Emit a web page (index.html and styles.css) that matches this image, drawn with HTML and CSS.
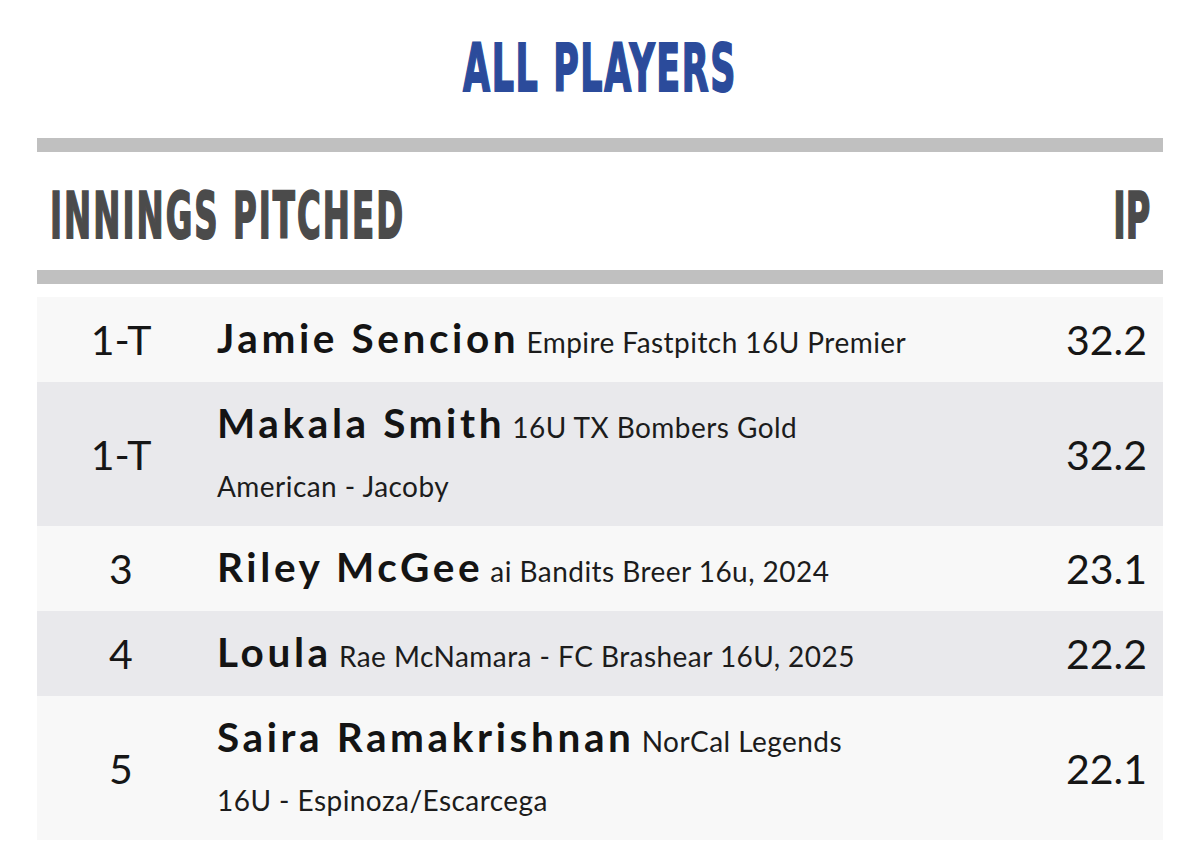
FILE: index.html
```html
<!DOCTYPE html>
<html lang="en">
<head>
<meta charset="utf-8">
<title>All Players – Innings Pitched</title>
<link rel="stylesheet" href="styles.css">
</head>
<body>
<main class="board">
  <h1 class="title"><span class="condensed">ALL PLAYERS</span></h1>
  <section class="stat">
    <header class="stat-head">
      <h2 class="stat-name"><span class="condensed left">INNINGS PITCHED</span></h2>
      <div class="stat-abbr"><span class="condensed right">IP</span></div>
    </header>
    <ol class="rows">
      <li class="row">
        <div class="rank">1-T</div>
        <div class="who"><strong class="player">Jamie Sencion</strong> <span class="team">Empire Fastpitch 16U Premier</span></div>
        <div class="val">32.2</div>
      </li>
      <li class="row">
        <div class="rank">1-T</div>
        <div class="who"><strong class="player">Makala Smith</strong> <span class="team">16U TX Bombers Gold American&nbsp;-&nbsp;Jacoby</span></div>
        <div class="val">32.2</div>
      </li>
      <li class="row">
        <div class="rank">3</div>
        <div class="who"><strong class="player">Riley McGee</strong> <span class="team">ai Bandits Breer 16u, 2024</span></div>
        <div class="val">23.1</div>
      </li>
      <li class="row">
        <div class="rank">4</div>
        <div class="who"><strong class="player">Loula</strong> <span class="team">Rae McNamara - FC Brashear 16U, 2025</span></div>
        <div class="val">22.2</div>
      </li>
      <li class="row">
        <div class="rank">5</div>
        <div class="who"><strong class="player">Saira Ramakrishnan</strong> <span class="team">NorCal Legends 16U&nbsp;-&nbsp;Espinoza/Escarcega</span></div>
        <div class="val">22.1</div>
      </li>
    </ol>
  </section>
</main>
</body>
</html>
```
FILE: styles.css
```css
* { box-sizing: border-box; }

html, body {
  margin: 0;
  padding: 0;
  background: #ffffff;
}

body {
  font-family: Lato, "Noto Sans", sans-serif;
  color: #161616;
}

.board {
  padding: 0 37px;
}

/* condensed display type */
.condensed {
  display: inline-block;
  transform-origin: center;
  -webkit-text-stroke: 2px currentColor;
  white-space: nowrap;
}
.condensed.left { transform-origin: left center; }
.condensed.right { transform-origin: right center; }

.title {
  margin: 0;
  padding-top: 34px;
  height: 138px;
  text-align: center;
  font-family: "DejaVu Sans", sans-serif;
  font-size: 65.8px;
  line-height: 69px;
  font-weight: 700;
  color: #2b4b9b;
}
.title .condensed {
  letter-spacing: 3px;
  transform: scaleX(0.531);
}

.stat-head {
  display: flex;
  justify-content: space-between;
  align-items: flex-start;
  height: 146px;
  border-top: 14px solid #c0c0c0;
  border-bottom: 14px solid #c0c0c0;
  padding: 30px 13px 0;
  color: #4b4b4b;
  font-family: "DejaVu Sans", sans-serif;
  font-size: 64.5px;
  line-height: 67px;
  font-weight: 700;
}
.stat-head .condensed {
  letter-spacing: 4px;
  transform: scaleX(0.503);
}
.stat-head .condensed.right {
  letter-spacing: 0;
  transform: scaleX(0.52);
}

.stat-name,
.stat-abbr {
  margin: 0;
  font: inherit;
}

.rows {
  list-style: none;
  margin: 13px 0 0;
  padding: 0;
}

.row {
  display: grid;
  grid-template-columns: 168px 692px 1fr;
  column-gap: 12px;
  align-items: center;
  padding: 10.5px 16px 10.5px 0;
  background: #f8f8f8;
}
.row:nth-child(even) {
  background: #e9e9ec;
}

.rank,
.val {
  font-size: 41px;
  line-height: 57px;
  font-weight: 400;
  color: #161616;
}
.rank { text-align: center; }
.val { text-align: right; }

.who {
  font-size: 28px;
  line-height: 59px;
}

.player {
  font-size: 40.5px;
  font-weight: 700;
  letter-spacing: 3.6px;
  color: #141414;
}

.team {
  font-size: 28px;
  font-weight: 400;
  letter-spacing: 0.45px;
  color: #1c1c1c;
}
```
